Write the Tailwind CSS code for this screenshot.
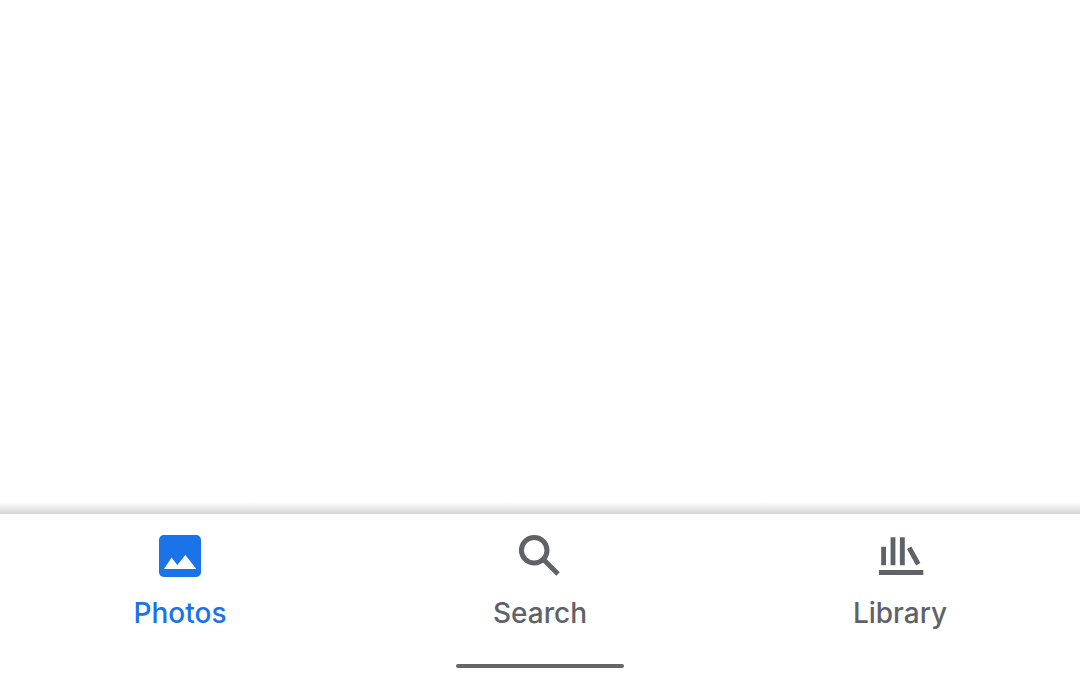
<!DOCTYPE html>
<html lang="en">
<head>
<meta charset="utf-8">
<meta name="viewport" content="width=device-width, initial-scale=1">
<title>Photos</title>
<script src="https://cdn.jsdelivr.net/npm/@tailwindcss/browser@4"></script>
</head>
<body class="flex min-h-screen flex-col bg-white font-['Inter',sans-serif]">
<main class="flex-1"></main>
<div class="h-3 bg-linear-to-b from-white to-[#d4d4d4]"></div>
<footer class="flex flex-col bg-white pt-3.5 pb-3.5">
  <nav class="grid grid-cols-3 text-[28px] leading-[34px] font-medium text-[#5f6368]">
    <a href="#photos" aria-current="page" class="flex flex-col items-center gap-3 text-[#1a73e8]">
      <svg class="size-14" viewBox="0 0 56 56" aria-hidden="true">
        <rect x="7" y="7" width="42" height="42" rx="4.7" fill="currentColor"/>
        <path d="M12 41 19.6 29.6 25.3 37 33.4 27 44.3 41z" fill="white"/>
      </svg>
      <span>Photos</span>
    </a>
    <a href="#search" class="flex flex-col items-center gap-3">
      <svg class="size-14" viewBox="0 0 56 56" fill="none" stroke="currentColor" stroke-width="5" aria-hidden="true">
        <circle cx="22.2" cy="22.2" r="12.8"/>
        <path d="M31 31 46 46"/>
      </svg>
      <span>Search</span>
    </a>
    <a href="#library" class="flex flex-col items-center gap-3">
      <svg class="size-14" viewBox="0 0 56 56" fill="currentColor" aria-hidden="true">
        <path d="M7 42h44.3v4.9H7zM9.2 18.7H14v18.6H9.2zM18.6 9.2h4.8v28.1h-4.8zM27.9 9.2h4.9v28.1h-4.9zM35 21.1l4.3-2.5 9.1 16.4-4.3 2.5z"/>
      </svg>
      <span>Library</span>
    </a>
  </nav>
  <div class="mt-[34px] h-1 w-42 self-center rounded-full bg-[#666666]"></div>
</footer>
</body>
</html>
